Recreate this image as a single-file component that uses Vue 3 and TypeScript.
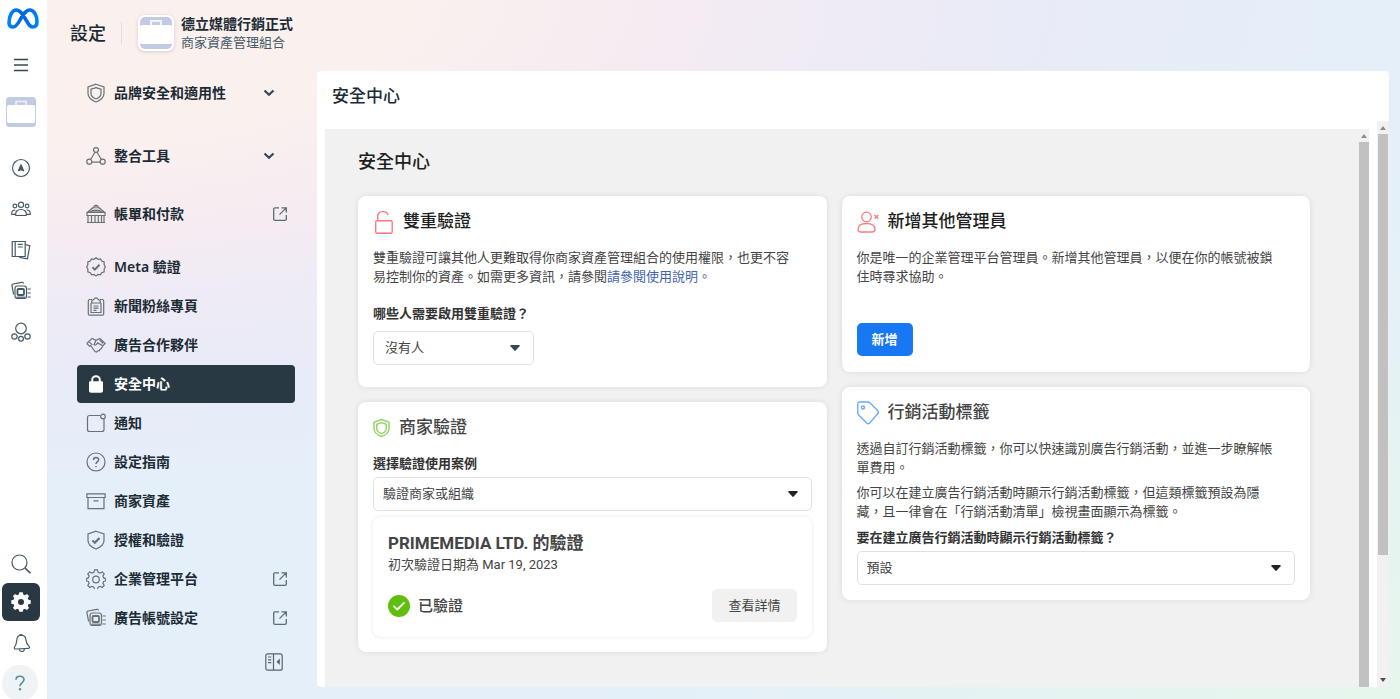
<script setup lang="ts">
import { ref } from 'vue'

interface NavItem {
  label: string
  icon: string
  trail?: 'chevron' | 'external'
  active?: boolean
}

const groups: NavItem[][] = [
  [{ label: '品牌安全和適用性', icon: 'shield', trail: 'chevron' }],
  [{ label: '整合工具', icon: 'nodes', trail: 'chevron' }],
  [{ label: '帳單和付款', icon: 'bank', trail: 'external' }],
  [
    { label: 'Meta 驗證', icon: 'badge' },
    { label: '新聞粉絲專頁', icon: 'clipboard' },
    { label: '廣告合作夥伴', icon: 'handshake' },
    { label: '安全中心', icon: 'lock', active: true },
    { label: '通知', icon: 'notice' },
    { label: '設定指南', icon: 'help' },
    { label: '商家資產', icon: 'archive' },
    { label: '授權和驗證', icon: 'shieldCheck' },
    { label: '企業管理平台', icon: 'gear', trail: 'external' },
    { label: '廣告帳號設定', icon: 'accounts', trail: 'external' },
  ],
]

const icons: Record<string, string> = {
  shield:
    '<path d="M10 1.200 18 4v6.500c0 4-3.400 6.700-8 8.500-4.600-1.800-8-4.500-8-8.500V4z"/><path d="M10 4.600 15 6.300v4.200c0 2.700-2 4.400-5 5.300-3-.9-5-2.600-5-5.300V6.300z"/>',
  nodes:
    '<circle cx="10" cy="4" r="2.400"/><circle cx="3.300" cy="15.700" r="2.500"/><circle cx="16.700" cy="15.700" r="2.500"/><path d="M9 6.300 4.600 13.500M11 6.300l4.400 7.200M5.900 16.200h8.200"/>',
  bank:
    '<path fill="currentColor" fill-opacity=".3" d="M1.500 8.200 7.500 3h5l6 5.200z"/><path d="M7.800 2.400 10 1.200l2.200 1.200M1 8.500h18v3H1zM2 11.500v7M5.500 11.500v7M9 11.500v7M12.300 11.500v7M15.500 11.500v7M18 11.500v7M1 18.500h18M4.500 8.200l2-1.700h7l2 1.700"/>',
  badge:
    '<path d="m10 .8 2 1.500 2.500-.4 1.200 2.200 2.500.8-.1 2.600L19.300 10l-1.200 2.200.1 2.600-2.500.9-1.200 2.200-2.500-.4-2 1.600-2-1.600-2.500.4-1.200-2.200-2.500-.9.100-2.600L.7 10l1.200-2.500-.1-2.600 2.500-.8 1.200-2.200L8 2.300z"/><path stroke-width="2" d="m6.500 10.300 2.300 2.300 4.700-4.800"/>',
  clipboard:
    '<path d="M6 3.500H3.800c-1 0-1.500.5-1.500 1.500v12.700c0 1 .5 1.500 1.500 1.500h12.400c1 0 1.500-.5 1.500-1.500V5c0-1-.5-1.500-1.500-1.500H14"/><path d="M8.300 3a1.800 1.800 0 0 1 3.400 0l2.600 2v2H5.700V5zM5 7v9.500h10V7M7.500 10h5M7.500 12.200h5M7.500 14.300h3"/>',
  handshake:
    '<path d="M.8 8.500 6 3.400l4 1.900L14 3.400l5.200 5.100-2.400 2.200-5.200-2.800c-1 1.800-2.200 2.600-3.500 1.800L10 5.300M.8 8.500l2.800 2.800 1-.8L9 16.600l1.500.5 1.300-1.300 1.500-.2.800-1.500 1.300-.6 1.400-2.800M2.800 6.600l3.600 3.300M13.600 4.800l3.500 3.700"/>',
  lock:
    '<path fill="currentColor" stroke="none" d="M3 8.500C3 7.700 3.600 7.200 4.300 7.200h.9V6a4.800 4.800 0 0 1 9.600 0v1.200h.9c.8 0 1.300.6 1.300 1.300v8.300c0 1.200-.8 1.900-1.900 1.900H4.900c-1.100 0-1.900-.8-1.900-1.900zM7.200 7.200h5.600V6a2.800 2.800 0 0 0-5.600 0z"/>',
  notice:
    '<path d="M14.500 2.500H3.500C2.300 2.500 1.500 3.300 1.500 4.500v12c0 1.200.8 2 2 2h12.500c1.200 0 2-.8 2-2V6"/><circle cx="17" cy="3.500" r="2.300"/>',
  help:
    '<circle cx="10" cy="10" r="9"/><path stroke-width="1.500" d="M7.500 8c0-3.400 5.200-3.200 5.200-.3 0 2-2.700 2-2.700 4.300M10 14v1.300"/>',
  archive:
    '<path d="M.9 2.800h18.200v3.700H.9zM2 6.500h16v11.200H2zM7.500 9.900h5"/>',
  shieldCheck:
    '<path d="M10 1.200 18 4v6.500c0 4-3.400 6.700-8 8.500-4.600-1.800-8-4.500-8-8.500V4z"/><path stroke-width="2.200" d="m6.500 10.500 2.300 2.200 4.700-4.800"/>',
  gear:
    '<path d="M8.600.9h2.800l.7 2.400 1.900.8 2.200-1.200 2 2-1.300 2.200.8 1.800 2 .7v2.200l-2 .7-.8 1.800 1.300 2.200-2 2-2.200-1.200-1.900.8-.7 2.400H8.600l-.7-2.400-1.900-.8-2.200 1.200-2-2 1.300-2.200-.8-1.800-2-.7V9.600l2-.7.800-1.800-1.300-2.200 2-2L6 4.100l1.900-.8z"/><circle cx="10" cy="10.500" r="3.300"/>',
  accounts:
    '<path d="M2.600 13.500 1 4.800c-.2-1 .2-1.600 1.200-1.800l8.600-1.700c1-.2 1.500.2 1.700 1.200M16.500 8h3.300M16.500 12h3.300M16.500 16h3.300"/><rect x="4" y="5" width="11.500" height="12.500" rx="2.500"/><rect x="6.500" y="8" width="6.500" height="6" rx="1" stroke-width="1.800"/><path d="M5.500 16.200h8.500"/>',
  compass:
    '<circle cx="10" cy="10" r="8.500"/><path fill="currentColor" stroke-linejoin="round" d="m10 6.800 2.600 5.900-2.600-1-2.600 1z"/>',
  people:
    '<circle cx="10" cy="5.800" r="2.600"/><circle cx="3.900" cy="7" r="1.800"/><circle cx="16.100" cy="7" r="1.800"/><path d="M4.800 16.500c-.8-4 1.800-6 5.200-6s6 2 5.200 6zM4.600 15.300H.8c-.4-2.600.8-4.300 3.600-4.300M15.400 15.300h3.800c.4-2.600-.8-4.300-3.600-4.300"/>',
  pages:
    '<path d="M1.200 1.500h13v15h-13zM4.200 1.500v15M6.800 4.300h5M6.800 7h5M14.300 4.700l4.500.9-2.300 13.200-8.300-1.500"/>',
  orbit:
    '<circle cx="10" cy="6.500" r="5.300"/><circle cx="3.500" cy="14.500" r="2.700"/><circle cx="10" cy="16.700" r="2.400"/><circle cx="16.500" cy="14.500" r="2.700"/>',
  search:
    '<circle cx="8.500" cy="8.500" r="7.500"/><path stroke-width="1.700" d="m14 14 5.400 5.200"/>',
  bell:
    '<path d="M10.300 2.100c3 .2 4.500 2 4.700 5 .2 3 1.200 4.500 3 6 1 1 .6 2.200-.6 2.200L4.600 16c-1.200 0-1.700-1-1-2 1.600-2.200 2-4 2.100-6.500.2-3.200 1.500-5.300 4.600-5.400zM8 2.800c.2-1.600 3.600-1.700 3.800 0M8.300 16c.3 3.400 5 3.300 5.100 0"/>',
}

const railItems = [
  { label: '總覽', icon: 'compass' },
  { label: '受眾', icon: 'people' },
  { label: '粉絲專頁', icon: 'pages' },
  { label: '廣告帳號', icon: 'accounts' },
  { label: '商家資產', icon: 'orbit' },
]

const twoFactor = ref('沒有人')
const useCase = ref('驗證商家或組織')
const tagDefault = ref('預設')
</script>

<template>
  <div class="app" lang="zh-Hant">
    <nav class="rail" aria-label="主選單">
      <a href="#" class="logo" aria-label="Meta">
        <svg width="32" height="21" viewBox="0 0 32 21" fill="none">
          <defs>
            <linearGradient id="metaStroke" x1="0" x2="1" y1="0" y2="0">
              <stop offset="0" stop-color="#0082fb" />
              <stop offset=".5" stop-color="#0064e0" />
              <stop offset="1" stop-color="#0082fb" />
            </linearGradient>
          </defs>
          <path d="M2 14.500C2 8 5 2 9.200 2c4.300 0 7.300 5.700 9.800 10 2.200 3.800 4 7 6.800 7 2.700 0 4.200-1.800 4.200-5.200C30 8 27.200 2 22.800 2 18.500 2 15.500 7.500 13 12c-2.100 3.800-4 7-6.900 7C3.500 19 2 17.500 2 14.500Z" stroke="url(#metaStroke)" stroke-width="3.600" />
        </svg>
      </a>
      <button class="rail-btn menu" aria-label="選單">
        <svg width="16" height="16" viewBox="0 0 16 16" fill="none" stroke="currentColor" stroke-width="1.600">
          <path d="M1 2.500h14M1 8h14M1 13.500h14" />
        </svg>
      </button>
      <button class="rail-btn case" aria-label="商家">
        <svg width="30" height="30" viewBox="0 0 30 30">
          <rect width="30" height="30" rx="3.500" fill="#c3cae3" />
          <rect x="1" y="8" width="28" height="18" rx="1.500" fill="#fff" />
          <path d="M10 8V4.500h10V8" fill="none" stroke="#edf0f8" stroke-width="1.600" />
        </svg>
      </button>
      <button v-for="item in railItems" :key="item.icon" class="rail-btn tall" :aria-label="item.label">
        <svg class="icon" viewBox="0 0 20 20" v-html="icons[item.icon]" />
      </button>
      <div class="spacer" />
      <button class="rail-btn find" aria-label="搜尋">
        <svg class="icon" viewBox="0 0 20 20" v-html="icons.search" />
      </button>
      <button class="rail-btn tile" aria-label="設定">
        <svg width="20" height="20" viewBox="0 0 20 20">
          <path fill="#fff" fill-rule="evenodd" d="M8.300.3h3.400l.6 2.300 1.500.6 2.100-1.200 2.100 2.100-1.200 2.100.6 1.500 2.300.6v3.400l-2.300.6-.6 1.500 1.200 2.100-2.100 2.100-2.100-1.200-1.500.6-.6 2.300H8.300l-.6-2.300-1.500-.6-2.100 1.200L2 15.900l1.200-2.100-.6-1.500-2.300-.6V8.300l2.300-.6.600-1.500L2 4.100 4.100 2l2.100 1.200 1.500-.6zM10 7a3 3 0 1 0 0 6 3 3 0 0 0 0-6z" />
        </svg>
      </button>
      <button class="rail-btn bell" aria-label="通知">
        <svg class="icon" viewBox="0 0 20 20" v-html="icons.bell" />
      </button>
      <button class="rail-btn ask" aria-label="協助">
        <svg width="12" height="16" viewBox="0 0 12 16" fill="none" stroke="currentColor" stroke-width="1.600">
          <path d="M2 4.800C2 .2 10 .2 10 4.600 10 7.700 6 7.700 6 11.200" />
          <circle cx="6" cy="14.300" r=".5" />
        </svg>
      </button>
    </nav>

    <div class="main">
      <header class="top">
        <h1>設定</h1>
        <span class="divider" />
        <span class="avatar">
          <svg width="32" height="32" viewBox="0 0 32 32">
            <rect width="32" height="32" rx="5" fill="#c3cae3" />
            <rect x="0" y="8" width="32" height="19" rx="1.500" fill="#fff" />
            <path d="M11 8V4h10v4" fill="none" stroke="#f3f5fb" stroke-width="2" />
          </svg>
        </span>
        <div class="who">
          <strong>德立媒體行銷正式</strong>
          <span>商家資產管理組合</span>
        </div>
      </header>

      <div class="body">
        <aside class="side">
          <ul v-for="(group, gi) in groups" :key="gi" :class="['group', 'g' + gi]">
            <li v-for="item in group" :key="item.label">
              <a href="#" :class="['item', { active: item.active }]">
                <svg class="icon" viewBox="0 0 20 20" v-html="icons[item.icon]" />
                <span class="text">{{ item.label }}</span>
                <svg v-if="item.trail === 'chevron'" class="chevron" width="12" height="8" viewBox="0 0 12 8">
                  <path d="m1.500 1.500 4.500 4.300 4.500-4.300" fill="none" stroke="currentColor" stroke-width="2.200" />
                </svg>
                <svg v-if="item.trail === 'external'" class="external" width="14" height="14" viewBox="0 0 14 14">
                  <path d="M6 .8H2C1.200.8.700 1.300.700 2v10c0 .8.500 1.300 1.300 1.300h10c.8 0 1.300-.5 1.300-1.300V8M8.500.8h4.800v4.700M13.200.9 6.500 7.600" fill="none" stroke="currentColor" stroke-width="1.300" />
                </svg>
              </a>
            </li>
          </ul>
          <button class="collapse" aria-label="收合">
            <svg width="18" height="18" viewBox="0 0 18 18" fill="none" stroke="currentColor" stroke-width="1.200">
              <rect x=".8" y=".8" width="16.400" height="16.400" rx="2" />
              <path d="M8.500.8v16.400M3 4h3.300M3 6.800h3.300M3 9.600h3.300" />
              <path d="M14.800 5.500v6.500l-3.300-3.200z" fill="currentColor" stroke="none" />
            </svg>
          </button>
        </aside>

        <section class="panel">
          <h2 class="panel-title">安全中心</h2>
          <div class="scroller">
            <div class="frame">
              <div class="content">
                <h2 class="page-title">安全中心</h2>
                <div class="columns">
                  <div class="column">
                    <article class="card two-factor">
                      <h3 class="strong">
                        <svg width="21" height="24" viewBox="0 0 21 24" fill="none" stroke="#fa7a80" stroke-width="1.400">
                          <rect x="2.700" y="10.700" width="16.500" height="12.500" rx="1.500" />
                          <path d="M4.700 10.500V6.500c0-6.300 9.300-6.300 10.300-1.300" />
                        </svg>
                        <span>雙重驗證</span>
                      </h3>
                      <p>雙重驗證可讓其他人更難取得你商家資產管理組合的使用權限，也更不容易控制你的資產。如需更多資訊，請參閱<a href="#">請參閱使用說明。</a></p>
                      <label for="two-factor">哪些人需要啟用雙重驗證？</label>
                      <div class="select">
                        <select id="two-factor" v-model="twoFactor">
                          <option>沒有人</option>
                        </select>
                        <svg width="10" height="6" viewBox="0 0 10 6"><path d="M1 0h8c.8 0 1 .6.500 1.200L5.700 5.600a1 1 0 0 1-1.400 0L.5 1.200C0 .6.200 0 1 0z" fill="#344854" /></svg>
                      </div>
                    </article>

                    <article class="card">
                      <h3>
                        <svg width="17" height="20" viewBox="0 0 18 20" fill="none" stroke="#93d366" stroke-width="1.500">
                          <path d="M9 1 17 4v6.500c0 4.200-3.300 6.700-8 8.500-4.700-1.800-8-4.300-8-8.500V4z" />
                          <path d="M9 4.300 14 6v4.500c0 2.700-2 4.500-5 5.500-3-1-5-2.800-5-5.500V6z" />
                        </svg>
                        <span>商家驗證</span>
                      </h3>
                      <label for="use-case" class="first">選擇驗證使用案例</label>
                      <div class="select wide">
                        <select id="use-case" v-model="useCase">
                          <option>驗證商家或組織</option>
                        </select>
                        <svg width="10" height="6" viewBox="0 0 10 6"><path d="M1 0h8c.8 0 1 .6.500 1.200L5.700 5.600a1 1 0 0 1-1.400 0L.5 1.200C0 .6.200 0 1 0z" fill="#222" /></svg>
                      </div>
                      <div class="result">
                        <h4>PRIMEMEDIA LTD. 的驗證</h4>
                        <p>初次驗證日期為 Mar 19, 2023</p>
                        <div class="status">
                          <svg width="22" height="22" viewBox="0 0 22 22" fill="none">
                            <circle cx="11" cy="11" r="11" fill="#5fbf0c" />
                            <path d="m6 11.300 3.300 3.200 6.700-6.600" stroke="#fff" stroke-width="1.800" stroke-linecap="round" stroke-linejoin="round" />
                          </svg>
                          <strong>已驗證</strong>
                          <button class="ghost">查看詳情</button>
                        </div>
                      </div>
                    </article>
                  </div>

                  <div class="column">
                    <article class="card">
                      <h3 class="strong">
                        <svg width="22" height="22" viewBox="0 0 22 22" fill="none" stroke="#fa7a80" stroke-width="1.300">
                          <circle cx="9.500" cy="6" r="4.800" />
                          <path d="M1 18.500c0-4 3-6 8.500-6s8.500 2 8.500 6c0 2-1.200 2.500-3 2.500H4c-1.800 0-3-.5-3-2.500zM17.500 4l3.800 3.800M21.300 4l-3.800 3.800" />
                        </svg>
                        <span>新增其他管理員</span>
                      </h3>
                      <p>你是唯一的企業管理平台管理員。新增其他管理員，以便在你的帳號被鎖住時尋求協助。</p>
                      <button class="primary">新增</button>
                    </article>

                    <article class="card">
                      <h3>
                        <svg width="22" height="24" viewBox="0 0 22 24" fill="none" stroke="#69abf8" stroke-width="1.400">
                          <path d="M2.800 1h8c.9 0 1.500.2 2.100.8l7.700 7.800c1 1 1 2.200 0 3.200l-7.900 9.200c-.9 1-2 1-3 .1L1.900 14.300C1.200 13.600.8 13 .8 12V3c0-1.200.8-2 2-2z" />
                          <circle cx="6" cy="6.500" r="1.500" />
                        </svg>
                        <span>行銷活動標籤</span>
                      </h3>
                      <p>透過自訂行銷活動標籤，你可以快速識別廣告行銷活動，並進一步瞭解帳單費用。</p>
                      <p class="next">你可以在建立廣告行銷活動時顯示行銷活動標籤，但這類標籤預設為隱藏，且一律會在「行銷活動清單」檢視畫面顯示為標籤。</p>
                      <label for="tag-default" class="tight">要在建立廣告行銷活動時顯示行銷活動標籤？</label>
                      <div class="select wide">
                        <select id="tag-default" v-model="tagDefault">
                          <option>預設</option>
                        </select>
                        <svg width="10" height="6" viewBox="0 0 10 6"><path d="M1 0h8c.8 0 1 .6.500 1.200L5.700 5.600a1 1 0 0 1-1.400 0L.5 1.200C0 .6.200 0 1 0z" fill="#222" /></svg>
                      </div>
                    </article>
                  </div>
                </div>
              </div>
              <div class="bar inner">
                <svg width="6" height="4" viewBox="0 0 6 4"><path d="m3 0 3 4H0z" fill="#8c8c8c" /></svg>
                <span class="thumb" />
              </div>
            </div>
            <div class="bar outer">
              <svg width="6" height="4" viewBox="0 0 6 4"><path d="m3 0 3 4H0z" fill="#8c8c8c" /></svg>
              <span class="thumb" />
              <svg class="down" width="6" height="4" viewBox="0 0 6 4"><path d="M0 0h6L3 4z" fill="#505050" /></svg>
            </div>
          </div>
        </section>
      </div>
    </div>
  </div>
</template>

<style>
body {
  margin: 0;
}
</style>

<style scoped>
* {
  box-sizing: border-box;
}

.app {
  display: flex;
  min-height: 100vh;
  font-family: "Noto Sans", "Noto Sans CJK TC", sans-serif;
  color: #1c2b33;
  background:
    radial-gradient(ellipse 60% 80% at 100% 100%, #e7f6ec 0%, rgba(231, 246, 236, 0) 100%),
    radial-gradient(ellipse 100% 72% at 0% 0%, #faf0ee 0%, #faf0ee 30%, #f4ebf3 50%, #e9ebf7 72%, #e4effa 100%);
}

h1, h2, h3, h4, p, ul {
  margin: 0;
  padding: 0;
}

button {
  border: 0;
  padding: 0;
  background: none;
  color: inherit;
  font-family: inherit;
  cursor: pointer;
}

.icon {
  width: 20px;
  height: 20px;
  flex: none;
  fill: none;
  stroke: currentColor;
  stroke-width: 1.2;
}

.rail {
  width: 47px;
  flex: none;
  display: flex;
  flex-direction: column;
  align-items: flex-start;
  padding-top: 8px;
  background: #fff;
  color: #465a66;
  overflow: hidden;
}

.logo {
  height: 21px;
  margin-left: 7px;
}

.rail-btn {
  display: flex;
  align-items: center;
  justify-content: center;
  width: 42px;
}

.menu {
  height: 32px;
  margin-top: 20px;
  color: #344854;
}

.case {
  height: 32px;
  margin: 15px 0 19px;
}

.tall {
  height: 41px;
}

.spacer {
  flex: 1;
}

.find {
  height: 38px;
}

.tile {
  width: 38px;
  height: 38px;
  margin-left: 2px;
  border-radius: 6px;
  background: #283943;
}

.bell {
  height: 44px;
}

.ask {
  width: 36px;
  height: 36px;
  margin: 0 0 -2px 2px;
  border-radius: 50%;
  background: #eff3f6;
  color: #4a8f9c;
}

.main {
  flex: 1;
  min-width: 0;
  display: flex;
  flex-direction: column;
}

.top {
  height: 71px;
  display: flex;
  align-items: center;
  padding: 0 23px 5px;
}

h1 {
  font-size: 18px;
  line-height: 24px;
  font-weight: 500;
}

.divider {
  width: 1px;
  height: 22px;
  margin: 0 16px 0 15px;
  background: #e2dde2;
}

.avatar {
  display: flex;
  padding: 2px;
  border-radius: 7px;
  background: #fff;
  box-shadow: 0 1px 4px rgba(0, 0, 0, 0.15);
}

.who {
  display: flex;
  flex-direction: column;
  margin-left: 7px;
  line-height: 19px;
}

.who strong {
  font-size: 14px;
  font-weight: 700;
}

.who span {
  font-size: 13px;
  color: #465a66;
}

.body {
  flex: 1;
  display: flex;
  padding: 0 11px 12px 30px;
}

.side {
  width: 218px;
  flex: none;
  display: flex;
  flex-direction: column;
  margin-right: 22px;
  padding-top: 3px;
}

.group {
  list-style: none;
  display: grid;
  gap: 1px;
}

.g1 {
  margin-top: 25px;
}

.g2 {
  margin-top: 20px;
}

.g3 {
  margin-top: 15px;
}

.item {
  display: flex;
  align-items: center;
  gap: 8px;
  height: 38px;
  padding: 0 8px 0 9px;
  border-radius: 4px;
  color: #1c2b33;
  font-size: 14px;
  line-height: 20px;
  font-weight: 600;
  text-decoration: none;
}

.item .icon {
  color: #6a7074;
}

.item .text {
  flex: 1;
}

.item .chevron {
  margin-right: 12px;
  color: #344854;
}

.item .external {
  color: #5c6a73;
}

.item.active,
.item.active .icon {
  background: #283943;
  color: #fff;
}

.collapse {
  align-self: flex-end;
  margin: 16px 12px 0 0;
  height: 18px;
  color: #5c6367;
}

.panel {
  flex: 1;
  min-width: 0;
  display: flex;
  flex-direction: column;
  border-radius: 4px;
  background: #fff;
  overflow: hidden;
}

.panel-title {
  height: 50px;
  padding-left: 15px;
  font-size: 17px;
  line-height: 50px;
  font-weight: 500;
}

.scroller {
  flex: 1;
  display: flex;
}

.frame {
  flex: 1;
  min-width: 0;
  display: flex;
  margin: 8px 8px 0;
  background: #f1f1f1;
}

.content {
  flex: 1;
  min-width: 0;
  padding: 20px 48px 34px 33px;
  font-family: Roboto, "Noto Sans CJK TC", sans-serif;
  color: #444;
}

.page-title {
  height: 47px;
  font-size: 18px;
  line-height: 26px;
  font-weight: 500;
  color: #1c1e21;
}

.columns {
  display: flex;
  align-items: flex-start;
  gap: 15px;
}

.column {
  flex: 1;
  min-width: 0;
  display: grid;
  gap: 15px;
}

.card {
  padding: 12px 15px 15px;
  border-radius: 8px;
  background: #fff;
  box-shadow: 0 0 6px rgba(0, 0, 0, 0.09);
}

.two-factor {
  padding-bottom: 22px;
}

h3 {
  display: flex;
  align-items: center;
  gap: 9px;
  height: 28px;
  font-size: 17px;
  line-height: 24px;
  font-weight: 500;
  color: #444;
}

h3 span {
  padding-bottom: 3px;
}

h3.strong {
  color: #1c1e21;
}

.card p {
  margin-top: 12px;
  padding-right: 15px;
  font-size: 13px;
  line-height: 19px;
}

.card p.next {
  margin-top: 6px;
}

.card p a {
  color: #4263ad;
  text-decoration: none;
}

label {
  display: block;
  margin: 18px 0 8px;
  font-size: 13px;
  line-height: 19px;
  font-weight: 600;
  color: #333;
}

label.first {
  margin: 12px 0 4px;
}

label.tight {
  margin: 7px 0 4px;
}

.select {
  position: relative;
  width: 161px;
}

.select.wide {
  width: auto;
}

select {
  display: block;
  appearance: none;
  width: 100%;
  height: 34px;
  padding: 0 36px 2px 11px;
  border: 1px solid #dfe1e4;
  border-radius: 5px;
  background: #fff;
  color: #444;
  font-family: inherit;
  font-size: 13px;
}

.wide select {
  padding-left: 9px;
}

.select svg {
  position: absolute;
  right: 14px;
  top: 14px;
}

.result {
  margin-top: 6px;
  padding: 15px;
  border-radius: 8px;
  box-shadow: 0 0 4px rgba(0, 0, 0, 0.1);
}

h4 {
  font-size: 17px;
  line-height: 22px;
  font-weight: 700;
}

.result p {
  margin-top: 1px;
}

.status {
  display: flex;
  align-items: center;
  gap: 8px;
  margin-top: 15px;
}

.status strong {
  flex: 1;
  padding-bottom: 2px;
  font-size: 15px;
  font-weight: 500;
}

.ghost,
.primary {
  height: 33px;
  padding: 0 15px 2px;
  border-radius: 5px;
  font-size: 13px;
}

.ghost {
  padding: 0 16px 2px;
  background: #f1f1f1;
  color: #444;
}

.primary {
  display: block;
  margin: 37px 0 1px;
  background: #1877f2;
  color: #fff;
  font-weight: 600;
}

.bar {
  flex: none;
  display: flex;
  flex-direction: column;
  align-items: center;
  padding-top: 5px;
  background: #f1f1f1;
}

.bar svg {
  flex: none;
}

.thumb {
  width: 10px;
  margin-top: 4px;
  background: #c1c1c1;
}

.inner {
  width: 11px;
}

.inner .thumb {
  flex: 1;
}

.outer {
  width: 12px;
}

.outer .thumb {
  height: 75%;
}

.outer .down {
  margin: auto 0 5px;
}
</style>
